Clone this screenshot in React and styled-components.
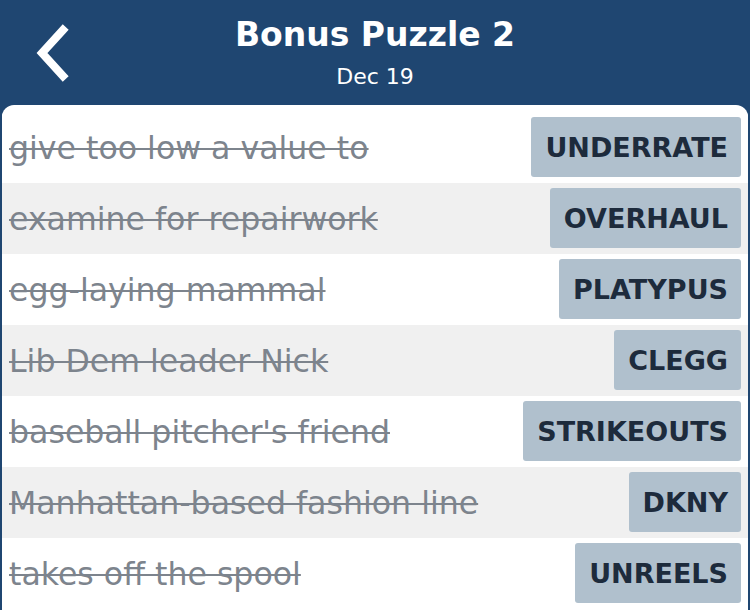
import React from 'react';
import styled, { createGlobalStyle } from 'styled-components';

const GlobalStyle = createGlobalStyle`
  html, body {
    margin: 0;
    padding: 0;
    background: #1f4671;
    font-family: "DejaVu Sans", Lato, sans-serif;
  }
`;

const Page = styled.div`
  width: 750px;
  height: 610px;
  overflow: hidden;
  background: #1f4671;
  display: flex;
  flex-direction: column;
`;

const Header = styled.header`
  height: 105px;
  position: relative;
  display: flex;
  flex-direction: column;
  align-items: center;
  color: #fff;
`;

const BackButton = styled.button`
  position: absolute;
  left: 30px;
  top: 24px;
  width: 48px;
  height: 58px;
  padding: 0;
  border: none;
  background: transparent;
  cursor: pointer;
`;

const Title = styled.h1`
  margin: 13px 0 0;
  font-size: 33px;
  line-height: 44px;
  font-weight: 700;
`;

const Subtitle = styled.div`
  font-size: 22px;
  line-height: 26px;
  margin-top: 7px;
`;

const Card = styled.main`
  flex: 1;
  margin: 0 2px;
  padding-top: 7px;
  background: #fff;
  border-radius: 12px 12px 0 0;
  overflow: hidden;
`;

const Row = styled.div`
  height: 71px;
  display: flex;
  align-items: center;
  justify-content: space-between;
  padding: 0 9px;
  margin: 0 -2px;
  background: ${(p) => (p.$shaded ? '#f0f0f0' : '#ffffff')};
`;

const Clue = styled.span`
  font-size: 31.6px;
  color: #7d848d;
  text-decoration: line-through;
  text-decoration-thickness: 2px;
  white-space: nowrap;
`;

const Answer = styled.span`
  height: 60px;
  padding: 0 13px 0 14px;
  display: flex;
  align-items: center;
  background: #b0c0cd;
  border-radius: 3px;
  color: #1d2b3c;
  font-size: 27px;
  font-weight: 700;
  margin-bottom: 1px;
`;

const clues = [
  ['give too low a value to', 'UNDERRATE'],
  ['examine for repairwork', 'OVERHAUL'],
  ['egg-laying mammal', 'PLATYPUS'],
  ['Lib Dem leader Nick', 'CLEGG'],
  ["baseball pitcher's friend", 'STRIKEOUTS'],
  ['Manhattan-based fashion line', 'DKNY'],
  ['takes off the spool', 'UNREELS'],
];

export default function App() {
  return (
    <Page>
      <GlobalStyle />
      <Header>
        <BackButton aria-label="Back">
          <svg width="48" height="58" viewBox="0 0 48 58">
            <polyline
              points="33,6 12,29 33,52"
              fill="none"
              stroke="#fff"
              strokeWidth="8"
              strokeLinecap="square"
            />
          </svg>
        </BackButton>
        <Title>Bonus Puzzle 2</Title>
        <Subtitle>Dec 19</Subtitle>
      </Header>
      <Card>
        {clues.map(([clue, answer], i) => (
          <Row key={answer} $shaded={i % 2 === 1}>
            <Clue>{clue}</Clue>
            <Answer>{answer}</Answer>
          </Row>
        ))}
      </Card>
    </Page>
  );
}
